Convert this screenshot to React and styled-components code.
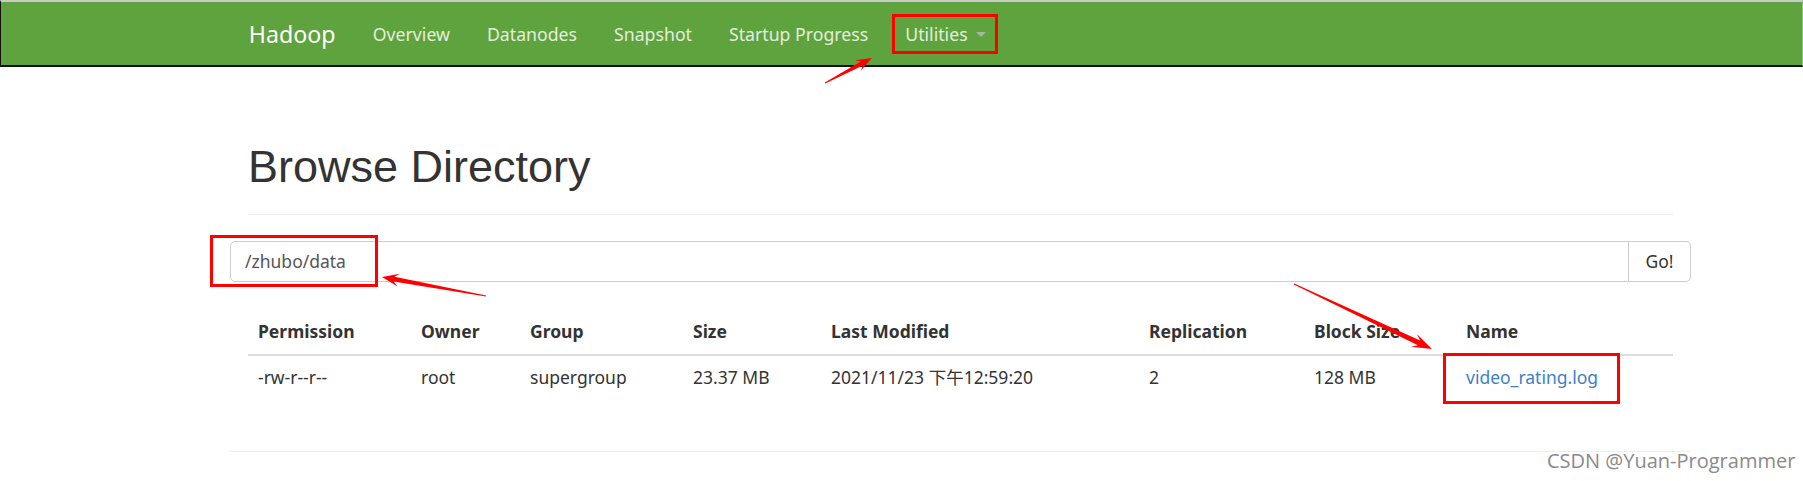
import React from "react";
import styled, { createGlobalStyle } from "styled-components";

const Global = createGlobalStyle`
  html, body { margin: 0; padding: 0; background: #fff; }
  body {
    font-family: "Noto Sans", "Noto Sans CJK SC", sans-serif;
    font-size: 17.5px;
    color: #333;
  }
`;

const Page = styled.div`
  position: relative;
  width: 1803px;
  height: 481px;
  overflow: hidden;
`;

const NavBar = styled.nav`
  box-sizing: border-box;
  height: 67px;
  background: #5fa33e;
  border-top: 2px solid #c9c9c9;
  border-left: 1px solid #111;
  border-right: 1px solid #8fbf79;
  border-bottom: 2px solid #111;
  display: flex;
  align-items: center;
  padding-left: 229px;
`;

const Brand = styled.a`
  font-size: 23.2px;
  color: #fff;
  padding: 0 18.75px;
  text-decoration: none;
`;

const NavLink = styled.a`
  font-size: 17.7px;
  color: #e4eedd;
  padding: 0 18.5px;
  text-decoration: none;
  display: flex;
  align-items: center;
  gap: 8px;
`;

const Caret = styled.span`
  width: 0;
  height: 0;
  border-top: 5px solid #a8b5a0;
  border-left: 5px solid transparent;
  border-right: 5px solid transparent;
  margin-top: 2px;
`;

const Container = styled.main`
  width: 1461px;
  margin-left: 230px;
`;

const PageHeader = styled.div`
  margin: 0 18px;
  padding-top: 75px;
  padding-bottom: 22px;
  border-bottom: 1px solid #eee;
`;

const Title = styled.h1`
  margin: 0;
  font-family: "Liberation Sans", Arial, sans-serif;
  font-weight: 400;
  font-size: 45px;
  line-height: 1.1;
  color: #333;
`;

const InputGroup = styled.div`
  display: flex;
  margin-top: 26px;
  height: 41px;
`;

const PathInput = styled.div`
  flex: 1;
  box-sizing: border-box;
  border: 1px solid #ccc;
  border-radius: 5px 0 0 5px;
  padding: 0 14px;
  display: flex;
  align-items: center;
  color: #555;
  font-size: 17.5px;
`;

const GoButton = styled.button`
  width: 62px;
  box-sizing: border-box;
  border: 1px solid #ccc;
  border-left: none;
  border-radius: 0 5px 5px 0;
  background: #fff;
  color: #333;
  font-family: "Noto Sans", sans-serif;
  font-size: 17.5px;
  padding: 0;
`;

const Table = styled.table`
  margin: 27px 18px 0;
  width: 1425px;
  table-layout: fixed;
  border-collapse: collapse;
`;

const Th = styled.th`
  box-sizing: border-box;
  width: ${(p) => (p.$w ? `${p.$w}px` : "auto")};
  text-align: left;
  font-weight: 700;
  padding: 10px;
  line-height: 25px;
  border-bottom: 2px solid #ddd;
  color: #333;
`;

const Td = styled.td`
  padding: 9px 10px 11px;
  line-height: 25px;
  color: #333;
  white-space: nowrap;
`;

const FileLink = styled.a`
  color: #3e80c6;
  text-decoration: none;
`;

const BottomRule = styled.hr`
  margin: 50px 0 0;
  border: 0;
  border-top: 1px solid #eee;
`;

const Overlay = styled.svg`
  position: absolute;
  left: 0;
  top: 0;
  pointer-events: none;
`;

const Watermark = styled.div`
  position: absolute;
  left: 1547px;
  top: 447px;
  font-family: "Open Sans", sans-serif;
  font-size: 20px;
  color: #8a8a8a;
  text-shadow: 0 0 1px #fff;
  white-space: nowrap;
`;

function arrowPoints(tx, ty, hx, hy, headLen, headHalf, neck) {
  const dx = hx - tx;
  const dy = hy - ty;
  const len = Math.hypot(dx, dy);
  const ux = dx / len;
  const uy = dy / len;
  const px = -uy;
  const py = ux;
  const bx = hx - ux * headLen;
  const by = hy - uy * headLen;
  const nx = hx - ux * headLen * 0.72;
  const ny = hy - uy * headLen * 0.72;
  const pts = [
    [tx + px * 0.4, ty + py * 0.4],
    [nx + px * neck, ny + py * neck],
    [bx + px * headHalf, by + py * headHalf],
    [hx, hy],
    [bx - px * headHalf, by - py * headHalf],
    [nx - px * neck, ny - py * neck],
    [tx - px * 0.4, ty - py * 0.4],
  ];
  return pts.map((p) => p.map((v) => v.toFixed(1)).join(",")).join(" ");
}

const columns = [
  ["Permission", 163],
  ["Owner", 109],
  ["Group", 163],
  ["Size", 138],
  ["Last Modified", 318],
  ["Replication", 165],
  ["Block Size", 152],
  ["Name", null],
];

export default function App() {
  return (
    <Page>
      <Global />
      <NavBar>
        <Brand>Hadoop</Brand>
        <NavLink>Overview</NavLink>
        <NavLink>Datanodes</NavLink>
        <NavLink>Snapshot</NavLink>
        <NavLink>Startup Progress</NavLink>
        <NavLink>
          Utilities
          <Caret />
        </NavLink>
      </NavBar>
      <Container>
        <PageHeader>
          <Title>Browse Directory</Title>
        </PageHeader>
        <InputGroup>
          <PathInput>/zhubo/data</PathInput>
          <GoButton>Go!</GoButton>
        </InputGroup>
        <Table>
          <thead>
            <tr>
              {columns.map(([name, w]) => (
                <Th key={name} $w={w}>
                  {name}
                </Th>
              ))}
            </tr>
          </thead>
          <tbody>
            <tr>
              <Td>-rw-r--r--</Td>
              <Td>root</Td>
              <Td>supergroup</Td>
              <Td>23.37 MB</Td>
              <Td>2021/11/23 下午12:59:20</Td>
              <Td>2</Td>
              <Td>128 MB</Td>
              <Td>
                <FileLink>video_rating.log</FileLink>
              </Td>
            </tr>
          </tbody>
        </Table>
        <BottomRule />
      </Container>
      <Overlay width="1803" height="481" viewBox="0 0 1803 481">
        <g fill="none" stroke="#ff0000" strokeWidth="3">
          <rect x="893.5" y="15.5" width="103" height="37" />
          <rect x="211.5" y="236.5" width="165" height="49" />
          <rect x="1444.5" y="354.5" width="174" height="48" />
        </g>
        <g fill="#ff0000">
          <polygon points={arrowPoints(825, 83, 872, 58, 16, 6, 2.2)} />
          <polygon points={arrowPoints(486, 296, 382, 277, 17, 6.5, 2.4)} />
          <polygon points={arrowPoints(1294, 284, 1432, 349, 20, 7, 2.6)} />
        </g>
      </Overlay>
      <Watermark>CSDN @Yuan-Programmer</Watermark>
    </Page>
  );
}
